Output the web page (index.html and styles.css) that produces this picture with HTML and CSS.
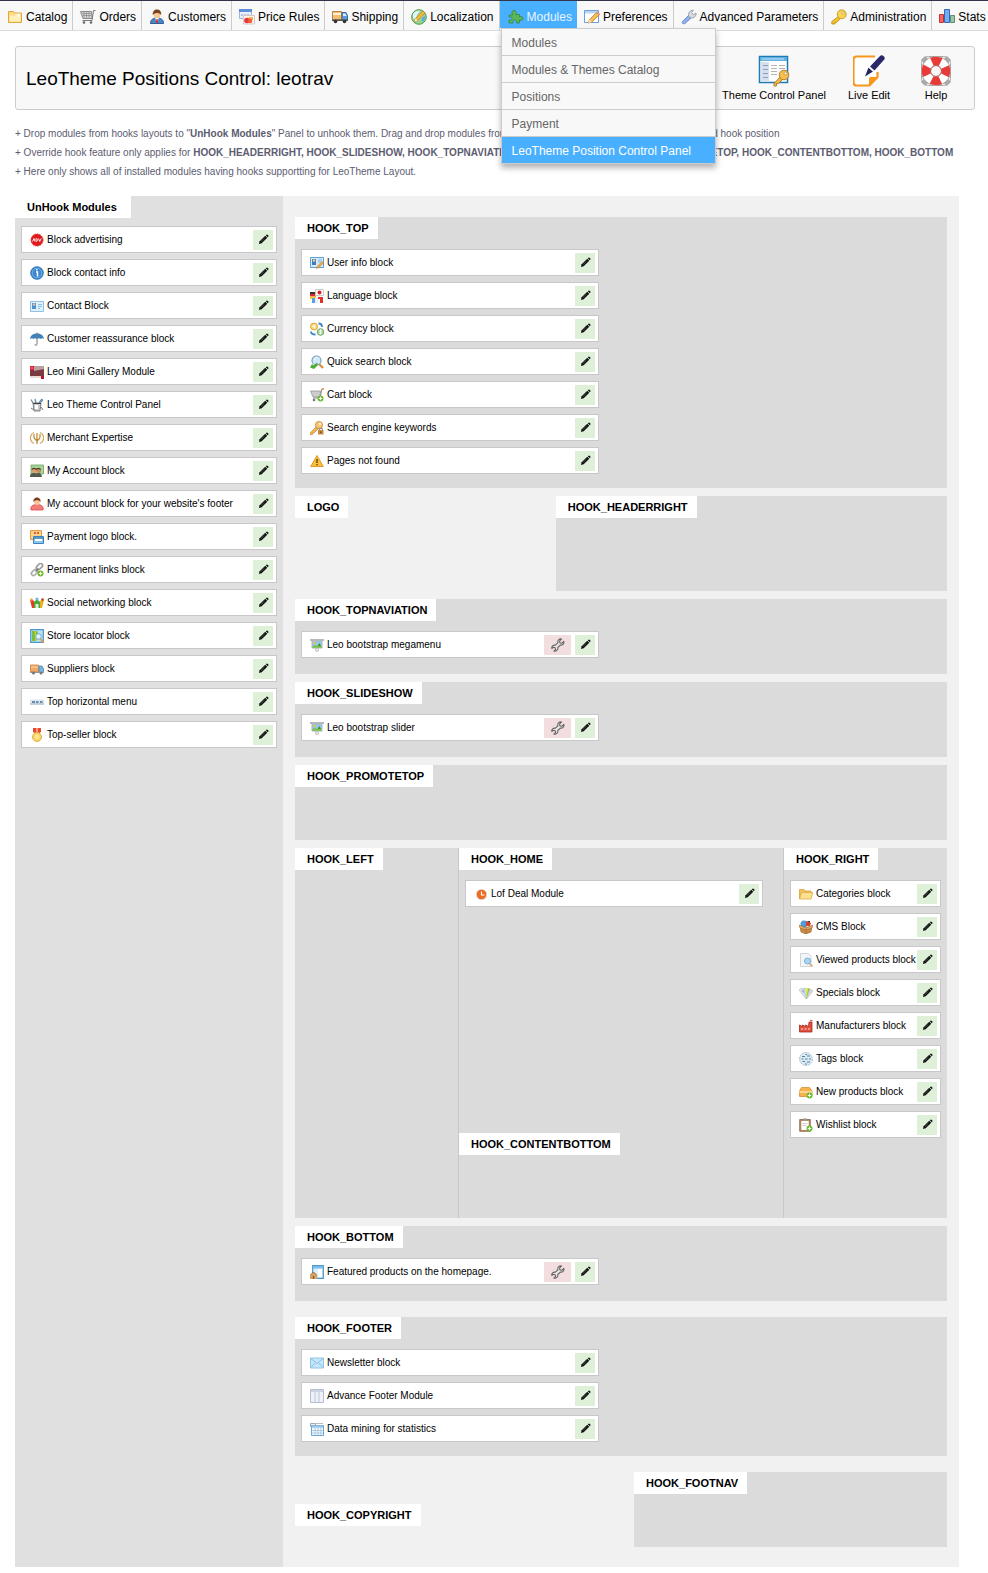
FILE: index.html
```html
<!DOCTYPE html>
<html lang="en">
<head>
<meta charset="utf-8">
<meta name="viewport" content="width=device-width, initial-scale=1">
<title>LeoTheme Positions Control</title>
<link rel="stylesheet" href="styles.css">
</head>
<body>
<svg class="sprite" aria-hidden="true">
  <symbol id="pencil" viewBox="0 0 12 12"><path d="M1 11l.8-3L7.9 2l2.200 2.200L4 10.200z" fill="#111"/><path d="M8.500 1.400l.7-.7a.8.8 0 0 1 1.100 0l1 1a.8.8 0 0 1 0 1.100l-.7.7z" fill="#111"/><path d="M3.200 8.400l4-4" stroke="#777" stroke-width=".6"/></symbol>
  <symbol id="wrench" viewBox="0 0 14 14"><path d="M12.800 3.300l-2.100 2-1.800-.4-.4-1.800 2-2C8.500.4 6.300 2.200 6.800 4.800L4.400 7.200C2.200 6.800.5 8.400.8 10.500l1.700-1.300 1.700.5.4 1.600-1.700 1.800c2.300.5 4.300-1.200 3.900-3.600l2.500-2.400c2.500.4 4.100-1.800 3.500-3.800z" fill="#ece6e6" stroke="#666" stroke-width="1.100" stroke-linejoin="round"/></symbol>
  <symbol id="screen" viewBox="0 0 14 14"><path d="M2 3h10v7H2z" fill="#8cc8f0" stroke="#aeb6bc"/><path d="M0 1h14v2H0z" fill="#b5b9bd"/><path d="M2.500 8l2-1 2 1 2.500-2 2.500 2v1.700h-9z" fill="#7cc144"/><circle cx="4.500" cy="5" r="1.200" fill="#ffc02e"/><path d="M8 8l1.300-3L11 8z" fill="#3f8b2b"/><circle cx="7" cy="12" r="1.600" fill="#e8eaec" stroke="#aaa" stroke-width=".6"/></symbol>
</svg>

<nav class="topbar" aria-label="Main">
  <ul class="menu">
    <li><a href="#"><svg viewBox="0 0 16 16"><path d="M1.500 13.500v-11h5l1 1.500h7v9.500z" fill="#ffd982" stroke="#e0a741"/><path d="M2.500 6.500h11v6h-11z" fill="#ffefb9"/><path d="M7 5l6-.5v4z" fill="#fff7dc"/></svg>Catalog</a></li>
    <li><a href="#"><svg viewBox="0 0 16 16"><path d="M.5 2.500h11l.5 7H3z" fill="#d8d8d8" stroke="#8a8a8a"/><path d="M2 4.500h9.500M2.500 6.500h9M4 3v6M6.500 3v6M9 3v6" stroke="#888" stroke-width=".7"/><path d="M15.500 1.500h-2L12 11.500H2.500" fill="none" stroke="#777"/><circle cx="4" cy="13.500" r="1.300" fill="#666"/><circle cx="11" cy="13.500" r="1.300" fill="#666"/></svg>Orders</a></li>
    <li><a href="#"><svg viewBox="0 0 16 16"><path d="M1.500 14.500c0-4 2.500-5.500 6.500-5.500s6.500 1.500 6.500 5.500z" fill="#4d86c4" stroke="#2f5f99"/><path d="M6 9l2 4 2-4z" fill="#fff"/><path d="M7.500 10h1l.5 3-1 1.500L7 13z" fill="#d22"/><circle cx="8" cy="5.500" r="3.500" fill="#f8c795"/><path d="M3.800 6C3.300 2.500 5.500.5 8 .5s4.700 2 4.200 5.500C11 5 10.500 3.800 8 4 5.500 3.800 5 5 3.800 6z" fill="#7a4420"/></svg>Customers</a></li>
    <li><a href="#"><svg viewBox="0 0 16 16"><path d="M.5.5h12v9H.5z" fill="#e8effb" stroke="#9db6e0"/><path d="M0 0h13v3H0z" fill="#5b8fdc"/><path d="M2 6h8" stroke="#7b95c9" stroke-dasharray="2 1"/><path d="M4.500 6.500h11v8.500h-11z" fill="#fff3ef" stroke="#d6c6c6"/><path d="M10 8h4v3h-4z" fill="#f3b44b"/><circle cx="8" cy="11.500" r="2.800" fill="#e83535"/><circle cx="11" cy="12" r="2.300" fill="#f25f39"/></svg>Price Rules</a></li>
    <li><a href="#"><svg viewBox="0 0 16 16"><path d="M.5 2.500h9v8h-9z" fill="#f5bc74" stroke="#b8824a"/><path d="M1 4h8v2H1z" fill="#fff0d8"/><path d="M10 3.500h4l1.500 3v4.500H10z" fill="#5f98d6" stroke="#376ba6"/><path d="M11 4.500h2.500l1 2.500H11z" fill="#d8ecff"/><path d="M0 10.500h16v1.500H0z" fill="#555"/><circle cx="3.500" cy="12.500" r="1.800" fill="#333"/><circle cx="12.500" cy="12.500" r="1.800" fill="#333"/></svg>Shipping</a></li>
    <li><a href="#"><svg viewBox="0 0 16 16"><circle cx="8" cy="8" r="7.300" fill="#9ad08f" stroke="#4a9d49"/><path d="M2 5c2-3 5-3.500 7-3L6 6 5 9 2 10z" fill="#dff4ff"/><path d="M11 9l3-2c.5 3-1 5-3 6z" fill="#57a9e2"/><path d="M3.500 12.500l1-3 7.500-7.500 2 2-7.500 7.500z" fill="#f6b53c" stroke="#c07c1f" stroke-width=".6"/><path d="M3.500 12.500l1-3 2 2z" fill="#fff2d3"/></svg>Localization</a></li>
    <li class="open"><a href="#" aria-expanded="true"><svg viewBox="0 0 16 16"><path d="M1 6h3.500C3 3 4.500 1.500 6 1.500S9 3 8 5.500h3.500V8c2-1 3.500 0 3.500 1.500s-1.500 2.200-3.500 1.500v3H8.500c.8-2-.3-3-1.700-3s-2.600 1-1.800 3H1v-3c2 .5 3-.3 3-1.500S3 7.500 1 8z" fill="#5bb65a" stroke="#37883b" stroke-width=".8"/></svg>Modules</a>
      <ul class="submenu">
        <li><a href="#">Modules</a></li>
        <li><a href="#">Modules &amp; Themes Catalog</a></li>
        <li><a href="#">Positions</a></li>
        <li><a href="#">Payment</a></li>
        <li class="current"><a href="#" aria-current="page">LeoTheme Position Control Panel</a></li>
      </ul>
    </li>
    <li><a href="#"><svg viewBox="0 0 16 16"><path d="M.5 1.500h14v12H.5z" fill="#fff" stroke="#6c9fd8"/><path d="M1 2h13v2.500H1z" fill="#b9d8f6"/><path d="M4 14l1.500-3.500L13 3l2.500 2.500L8 13z" fill="#f7bd50" stroke="#b7772a" stroke-width=".7"/><path d="M12 4l1.500-1.500 2.300 2.300L14.500 6z" fill="#e98d77"/><path d="M4 14l1.500-3.500L8 13z" fill="#f9e4bd"/></svg>Preferences</a></li>
    <li><a href="#"><svg viewBox="0 0 16 16"><path d="M1.500 12.500l6-6 2.500 2.500-6 5.500c-2 1-3.500-.5-2.500-2z" fill="#8fb1ee" stroke="#587dc6" stroke-width=".8"/><path d="M7.500 7C7 3.500 9.500.8 12.500 1.300L10.500 3.500l2 2.200L15 4c.5 3-2 5.500-5.500 5z" fill="#d7dbe0" stroke="#8b9097" stroke-width=".8"/></svg>Advanced Parameters</a></li>
    <li><a href="#"><svg viewBox="0 0 16 16"><path d="M8 7l2 2-4.500 4.500H4V15H.8v-2.500z" fill="#f4c131" stroke="#b98918" stroke-width=".8"/><circle cx="10.700" cy="5.300" r="4.500" fill="#f9d453" stroke="#bf8f1c" stroke-width=".8"/><circle cx="12" cy="4" r="1.300" fill="#fff" stroke="#b98918" stroke-width=".6"/></svg>Administration</a></li>
    <li><a href="#"><svg viewBox="0 0 16 16"><path d="M.5 5.500h4v8h-4z" fill="#f16666" stroke="#c43232"/><path d="M5.500.5h5v13h-5z" fill="#74aef0" stroke="#3267b8"/><path d="M11.500 6.500h4v7h-4z" fill="#9bc7a8" stroke="#5d8d75"/></svg>Stats</a></li>
  </ul>
</nav>

<header class="page-head">
  <h1>LeoTheme Positions Control: leotrav</h1>
  <div class="tools">
    <a href="#"><svg viewBox="0 0 32 32"><path d="M1.500 1.500h28v26h-28z" fill="#fff" stroke="#1d7ab5" stroke-width="1.500"/><path d="M2 2h27v4H2z" fill="#62afe2"/><path d="M4 4h22" stroke="#bfe2f8"/><path d="M3 7h8v20H3z" fill="#d4e0ee"/><path d="M5 10.500h5M5 14.500h5M5 18.500h5M5 22.500h5" stroke="#8aa0bd"/><path d="M13 10.500h6M21 10.500h6M13 13.500h6M21 13.500h6M13 16.500h6M13 19.500h6" stroke="#b3b3b3"/><path d="M23 21l2.500 2.500-5 5h-2V31h-2.500v-2.500z" fill="#f3b53f" stroke="#a4701d" stroke-width=".8"/><circle cx="26" cy="20" r="4.800" fill="#f7bd4e" stroke="#a4701d" stroke-width=".8"/><circle cx="27.500" cy="18.500" r="1.400" fill="#fff" stroke="#a4701d" stroke-width=".6"/></svg>Theme Control Panel</a>
    <a href="#"><svg viewBox="0 0 32 32"><path d="M22 1.500H3.500a3 3 0 0 0-3 3v23a3 3 0 0 0 3 3h13l8-8.500v-5" fill="#fff" stroke="#f8961e" stroke-width="2.200"/><path d="M16 31v-7a2 2 0 0 1 2-2h7z" fill="#f8961e"/><path d="M15.500 12.500l4.500 4-8 5z" fill="#25235f"/><path d="M17 11.500L27 1c2-2 6 1 4.300 3.600L21.500 15.500z" fill="#2a2869"/><path d="M15.500 12l4.500 4.500" stroke="#fff" stroke-width=".7"/></svg>Live Edit</a>
    <a href="#"><svg viewBox="0 0 32 32"><path d="M3 3l26 26M29 3L3 29" stroke="#aaa" stroke-width="6"/><rect x="1.500" y="1.500" width="29" height="29" rx="7" fill="none" stroke="#a9a9a9"/><circle cx="16" cy="16" r="10" fill="none" stroke="#9c9c9c" stroke-width="10"/><circle cx="16" cy="16" r="10" fill="none" stroke="#fff" stroke-width="8.500"/><circle cx="16" cy="16" r="10" fill="none" stroke="#e83a36" stroke-width="8.500" stroke-dasharray="9 6.708" stroke-dashoffset="4.500"/><circle cx="16" cy="16" r="5.400" fill="#f8f8f8" stroke="#a33" stroke-width=".8"/></svg>Help</a>
  </div>
</header>

<div class="notes">
  <p>+ Drop modules from hooks layouts to "<b>UnHook Modules</b>" Panel to unhook them. Drag and drop modules from unhook panel or from other hooks, to expected hook position</p>
  <p>+ Override hook feature only applies for <b>HOOK_HEADERRIGHT, HOOK_SLIDESHOW, HOOK_TOPNAVIATION, HOOK_CONTENTTOP, HOOK_PROMOTETOP, HOOK_CONTENTBOTTOM, HOOK_BOTTOM</b></p>
  <p>+ Here only shows all of installed modules having hooks supportting for LeoTheme Layout.</p>
</div>

<main class="board">
  <section class="unhooked">
    <h2 class="tab">UnHook Modules</h2>
    <ul class="modules">
      <li><svg viewBox="0 0 14 14"><circle cx="7" cy="7" r="6" fill="#e01b1b" stroke="#e01b1b" stroke-dasharray="1.500 1"/><path d="M2.500 8.500L4 5.500l1 3M6 5.500v3c2 0 2-3 0-3M8.500 5.500l1.200 3 1.500-3" stroke="#fff" fill="none" stroke-width=".9"/></svg><span>Block advertising</span><button class="edit" aria-label="Edit Block advertising"><svg><use href="#pencil"/></svg></button></li>
      <li><svg viewBox="0 0 14 14"><circle cx="7" cy="7" r="6.300" fill="#3b86d0" stroke="#2263a8" stroke-width=".8"/><circle cx="7" cy="7" r="4.800" fill="none" stroke="#9ccdf5" stroke-width=".6"/><path d="M6 6h1.500v4.500M6.200 3.800h1.300" stroke="#fff" stroke-width="1.500" fill="none"/></svg><span>Block contact info</span><button class="edit" aria-label="Edit Block contact info"><svg><use href="#pencil"/></svg></button></li>
      <li><svg viewBox="0 0 14 14"><path d="M.5 2.500h13v10H.5z" fill="#dff1fc" stroke="#8fc1e3"/><path d="M2 4h4v6H2z" fill="#4c92cc"/><circle cx="4" cy="5.500" r="1.200" fill="#f5c493"/><path d="M8 5.500h4M8 7.500h4M8 9.500h2" stroke="#8fbfe0"/></svg><span>Contact Block</span><button class="edit" aria-label="Edit Contact Block"><svg><use href="#pencil"/></svg></button></li>
      <li><svg viewBox="0 0 14 14"><path d="M0 7c.5-4 3.500-5.500 7-5.500S13.500 3 14 7c-1.500-1-2.500-1-3.500 0-1-1-2.500-1-3.500 0-1-1-2.500-1-3.500 0C2.500 6 1.500 6 0 7z" fill="#3c83bf"/><path d="M7 .5v11.800c0 1.500-2 1.500-2 0" fill="none" stroke="#777"/></svg><span>Customer reassurance block</span><button class="edit" aria-label="Edit Customer reassurance block"><svg><use href="#pencil"/></svg></button></li>
      <li><svg viewBox="0 0 14 14"><path d="M0 1h14v11H0z" fill="#7a3a40"/><path d="M0 1h4v4H0z" fill="#e0223a"/><path d="M1.500 2.500h1v1h-1z" fill="#fff"/><path d="M4 1h10v3L4 6z" fill="#b9a3a0"/><path d="M0 11h14v2H0z" fill="#e9d9d9"/><path d="M11 11h3v3h-3z" fill="#b3162a"/></svg><span>Leo Mini Gallery Module</span><button class="edit" aria-label="Edit Leo Mini Gallery Module"><svg><use href="#pencil"/></svg></button></li>
      <li><svg viewBox="0 0 14 14"><path d="M3 5L1 1.500M6 5L5 1M9 5l3-4" stroke="#6b8aa5" stroke-width="1.300"/><path d="M12 1l1.500 1L10 6z" fill="#4d90cc"/><path d="M3 5h8l-1 8H4z" fill="#c8ccd0" stroke="#666" stroke-width=".8"/><path d="M5 7h3v4H5z" fill="#fff"/><path d="M3 5.500h8" stroke="#444"/><path d="M1 10l3 2M11 9l2 3" stroke="#777"/></svg><span>Leo Theme Control Panel</span><button class="edit" aria-label="Edit Leo Theme Control Panel"><svg><use href="#pencil"/></svg></button></li>
      <li><svg viewBox="0 0 14 14"><path d="M4 1.500a6 6 0 0 0 0 11M10 1.500a6 6 0 0 1 0 11" fill="none" stroke="#d2a657" stroke-width="1.300"/><path d="M4 3v3c0 3 3 2 3 5M10 3v3c0 3-3 2-3 5M7 2v11" fill="none" stroke="#b98730" stroke-width="1.200"/></svg><span>Merchant Expertise</span><button class="edit" aria-label="Edit Merchant Expertise"><svg><use href="#pencil"/></svg></button></li>
      <li><svg viewBox="0 0 14 14"><path d="M1 1h12.500v9H1z" fill="#a5d49b" stroke="#6ba566" stroke-width=".8"/><path d="M0 13c0-3 1-4 3.500-4S7 10 8 9s4 1 4 4z" fill="#555a50"/><circle cx="4" cy="6.500" r="2.500" fill="#d9a273"/><circle cx="8.500" cy="6.500" r="2.500" fill="#c98c5c"/><path d="M1.500 6c0-3 5-3 5 0L4 5zM6 6c0-3 5-3 5 0L8.500 5z" fill="#5a3a22"/></svg><span>My Account block</span><button class="edit" aria-label="Edit My Account block"><svg><use href="#pencil"/></svg></button></li>
      <li><svg viewBox="0 0 14 14"><path d="M1 13c-1-4 2-5.500 6-5.500s7 1.500 6 5.500z" fill="#f17c78" stroke="#d24d4a" stroke-width=".8"/><circle cx="7" cy="5" r="3" fill="#f9c79a"/><path d="M3.500 5C3 2 5 .5 7 .5S11 2 10.500 5C9.500 3.500 8 3.300 7 3.300S4.500 3.500 3.500 5z" fill="#7c3d22"/></svg><span>My account block for your website's footer</span><button class="edit" aria-label="Edit My account block for your website's footer"><svg><use href="#pencil"/></svg></button></li>
      <li><svg viewBox="0 0 14 14"><path d="M.5.500h11v9H.5z" fill="#fbd18a" stroke="#df9a45"/><path d="M4 2h2v2H4zM7 2h2v2H7z" fill="#e65c36"/><path d="M3.500 6.500h10v7h-10z" fill="#8ac4f0" stroke="#3c82bf"/><path d="M5 9h7v2H5z" fill="#fff"/><path d="M4 8h9" stroke="#2a68a2"/></svg><span>Payment logo block.</span><button class="edit" aria-label="Edit Payment logo block."><svg><use href="#pencil"/></svg></button></li>
      <li><svg viewBox="0 0 14 14"><rect x="6" y="1.500" width="7" height="4" rx="2" transform="rotate(-45 9.500 3.500)" fill="none" stroke="#999" stroke-width="1.600"/><rect x="1" y="7.500" width="7" height="4" rx="2" transform="rotate(-45 4.500 9.500)" fill="none" stroke="#aaa" stroke-width="1.600"/><path d="M5.500 8.500l3-3" stroke="#777" stroke-width="1.500"/><circle cx="10.500" cy="10.500" r="3" fill="#6cbd2d"/><path d="M8.800 10.500h3.400M10.500 8.800v3.400" stroke="#fff"/></svg><span>Permanent links block</span><button class="edit" aria-label="Edit Permanent links block"><svg><use href="#pencil"/></svg></button></li>
      <li><svg viewBox="0 0 14 14"><path d="M0 4h3l2 3-1 5H2z" fill="#e43c25"/><path d="M14 4h-3L9 7l1 5h2z" fill="#e9b11c"/><path d="M4 6l3-3 3 3v6H4z" fill="#4aa83a"/><path d="M5.500 8h3v4h-3z" fill="#dff0d8"/><circle cx="1.500" cy="3.500" r="1.300" fill="#f2a93b"/><circle cx="7" cy="3" r="1.500" fill="#67b7e8"/><circle cx="12.500" cy="3.500" r="1.300" fill="#b04127"/></svg><span>Social networking block</span><button class="edit" aria-label="Edit Social networking block"><svg><use href="#pencil"/></svg></button></li>
      <li><svg viewBox="0 0 14 14"><path d="M.7.700h12.600v12.600H.7z" fill="#b9e0f5" stroke="#4a95c9" stroke-width="1.200"/><path d="M2 2h5l2 4-3 6H2z" fill="#79c13c"/><path d="M5 2l1 10" stroke="#f4d03c"/><circle cx="8.500" cy="7.500" r="2.800" fill="#dff3ff" stroke="#79a8c8"/><path d="M10.500 10l3 3.500" stroke="#e8973a" stroke-width="1.600"/></svg><span>Store locator block</span><button class="edit" aria-label="Edit Store locator block"><svg><use href="#pencil"/></svg></button></li>
      <li><svg viewBox="0 0 14 14"><path d="M.5 3h8v7h-8z" fill="#f0a965" stroke="#c47e3d" stroke-width=".8"/><path d="M1 5h7" stroke="#ffd9a8"/><path d="M9 4h3l1.600 3v3.500H9z" fill="#79b4df" stroke="#5385ad" stroke-width=".8"/><path d="M0 10h14v1H0z" fill="#999"/><circle cx="3.500" cy="11" r="1.500" fill="#777"/><circle cx="11" cy="11" r="1.500" fill="#777"/></svg><span>Suppliers block</span><button class="edit" aria-label="Edit Suppliers block"><svg><use href="#pencil"/></svg></button></li>
      <li><svg viewBox="0 0 14 14"><path d="M0 4.500h14v5H0z" fill="#dde7ef"/><path d="M0 9h14" stroke="#9cb0bf"/><path d="M2 7h3M6 7h2.500M10 7h2.500" stroke="#426f96" stroke-width="1.400"/></svg><span>Top horizontal menu</span><button class="edit" aria-label="Edit Top horizontal menu"><svg><use href="#pencil"/></svg></button></li>
      <li><svg viewBox="0 0 14 14"><path d="M3 0h8v4L7 6.500 3 4z" fill="#e8492e"/><path d="M6 0h2v5H6z" fill="#f8a07a"/><circle cx="7" cy="9" r="4.500" fill="#fbd264" stroke="#e9a93a" stroke-width=".9"/><circle cx="7" cy="9" r="2.400" fill="#fde79a"/></svg><span>Top-seller block</span><button class="edit" aria-label="Edit Top-seller block"><svg><use href="#pencil"/></svg></button></li>
    </ul>
  </section>

  <div class="hooks">
    <section class="hook">
      <h2 class="tab">HOOK_TOP</h2>
      <ul class="modules">
        <li><svg viewBox="0 0 14 14"><path d="M.5 1.500h13v10H.5z" fill="#d7ecfa" stroke="#5fa0d2"/><path d="M2 3h4v6H2z" fill="#3d7fb8"/><circle cx="4" cy="4.500" r="1.300" fill="#f5c493"/><path d="M8 4h4M8 6h3" stroke="#7fb1d8"/><path d="M6.500 12.500l1-2.500 4.500-4.500 1.500 1.500L9 11.500z" fill="#f2a94e" stroke="#b8742b" stroke-width=".5"/></svg><span>User info block</span><button class="edit" aria-label="Edit User info block"><svg><use href="#pencil"/></svg></button></li>
        <li><svg viewBox="0 0 14 14"><path d="M0 3h6v2.500H0z" fill="#333"/><path d="M0 5h6v2.500H0z" fill="#dd2b2b"/><path d="M0 7.500h6V10H0z" fill="#f6c62e"/><path d="M5.500.500h8v6h-8z" fill="#fff" stroke="#ccc"/><circle cx="9.500" cy="3.500" r="2" fill="#e02020"/><path d="M2 9h3v5H2z" fill="#5b9fe0"/><path d="M5 9h3v5H5z" fill="#eee"/><path d="M8 8h5v6h-3v-4H8z" fill="#e13327"/></svg><span>Language block</span><button class="edit" aria-label="Edit Language block"><svg><use href="#pencil"/></svg></button></li>
        <li><svg viewBox="0 0 14 14"><circle cx="4" cy="4.500" r="3.500" fill="#f9d77d" stroke="#e2a63a"/><path d="M5.500 3C3 2.500 3 6.500 5.500 6M2.500 4.500H5" fill="none" stroke="#fff"/><circle cx="10.500" cy="10" r="3.300" fill="#a9d3a2" stroke="#6fa968"/><path d="M12 8.500c-3-1-3 1-1.500 1.500s1.500 2-1.500 1.300M10.500 7.500v5" fill="none" stroke="#fff" stroke-width=".8"/><path d="M8.500 1.500c2.500 0 3.500 1 3.500 3.500M1 9.500c0 2.500 1.500 3 4.500 3" fill="none" stroke="#3d86c8" stroke-width="1.800"/></svg><span>Currency block</span><button class="edit" aria-label="Edit Currency block"><svg><use href="#pencil"/></svg></button></li>
        <li><svg viewBox="0 0 14 14"><path d="M9 9l4 4" stroke="#dc8a34" stroke-width="2.200"/><circle cx="6.500" cy="5.500" r="4.500" fill="#cfe8fa" stroke="#7c9fbd" stroke-width="1.200"/><path d="M4 5c0-2 2-3 4-2" fill="none" stroke="#fff"/><path d="M0 12.500l2-3.500 1.500 1.500L7 7.500l1 2.500-4 4z" fill="#4cac34"/></svg><span>Quick search block</span><button class="edit" aria-label="Edit Quick search block"><svg><use href="#pencil"/></svg></button></li>
        <li><svg viewBox="0 0 14 14"><path d="M.5 3h10l-.5 6H3z" fill="#ccc" stroke="#999" stroke-width=".8"/><path d="M13.500 1h-1.700L10 10H3" fill="none" stroke="#888"/><path d="M12 1h2" stroke="#ef9537" stroke-width="1.500"/><circle cx="4" cy="12" r="1.300" fill="#777"/><circle cx="10.500" cy="10.500" r="3" fill="#6cbd2d"/><path d="M8.800 10.500h3.400M10.500 8.800v3.400" stroke="#fff"/></svg><span>Cart block</span><button class="edit" aria-label="Edit Cart block"><svg><use href="#pencil"/></svg></button></li>
        <li><svg viewBox="0 0 14 14"><path d="M7 5l2 2-5 5H2.500v1.500H0V12z" fill="#f1b453" stroke="#bd8230" stroke-width=".6"/><circle cx="9" cy="4" r="3.600" fill="#f7c56e" stroke="#bd8230" stroke-width=".7"/><circle cx="10" cy="3" r="1" fill="#fff"/><path d="M8 9h5.500v4.500H8z" fill="#c9883b"/><path d="M9.300 9V7.500h3V9" fill="none" stroke="#888"/><path d="M10.300 10.500h1V12h-1z" fill="#333"/></svg><span>Search engine keywords</span><button class="edit" aria-label="Edit Search engine keywords"><svg><use href="#pencil"/></svg></button></li>
        <li><svg viewBox="0 0 14 14"><path d="M7 1.500l6.300 11H.7z" fill="#fcbf3a" stroke="#e3962a" stroke-linejoin="round"/><path d="M7 5v4M7 10v1.300" stroke="#5a4020" stroke-width="1.400"/></svg><span>Pages not found</span><button class="edit" aria-label="Edit Pages not found"><svg><use href="#pencil"/></svg></button></li>
      </ul>
    </section>

    <div class="row row-header">
      <section class="hook clear"><h2 class="tab">LOGO</h2></section>
      <section class="hook"><h2 class="tab">HOOK_HEADERRIGHT</h2></section>
    </div>

    <section class="hook">
      <h2 class="tab">HOOK_TOPNAVIATION</h2>
      <ul class="modules">
        <li><svg><use href="#screen"/></svg><span>Leo bootstrap megamenu</span><button class="override" aria-label="Override Leo bootstrap megamenu"><svg><use href="#wrench"/></svg></button><button class="edit" aria-label="Edit Leo bootstrap megamenu"><svg><use href="#pencil"/></svg></button></li>
      </ul>
    </section>

    <section class="hook">
      <h2 class="tab">HOOK_SLIDESHOW</h2>
      <ul class="modules">
        <li><svg><use href="#screen"/></svg><span>Leo bootstrap slider</span><button class="override" aria-label="Override Leo bootstrap slider"><svg><use href="#wrench"/></svg></button><button class="edit" aria-label="Edit Leo bootstrap slider"><svg><use href="#pencil"/></svg></button></li>
      </ul>
    </section>

    <section class="hook"><h2 class="tab">HOOK_PROMOTETOP</h2></section>

    <div class="row row-content">
      <section class="hook"><h2 class="tab">HOOK_LEFT</h2></section>
      <div class="center">
        <section class="hook home">
          <h2 class="tab">HOOK_HOME</h2>
          <ul class="modules">
            <li><svg viewBox="0 0 14 14"><circle cx="7.500" cy="7.500" r="5.600" fill="#ddd"/><circle cx="7.500" cy="7.500" r="4.800" fill="#ee6c22"/><path d="M7.500 4.500v3.500h3" fill="none" stroke="#fff" stroke-width="1.100"/></svg><span>Lof Deal Module</span><button class="edit" aria-label="Edit Lof Deal Module"><svg><use href="#pencil"/></svg></button></li>
          </ul>
        </section>
        <section class="hook"><h2 class="tab">HOOK_CONTENTBOTTOM</h2></section>
      </div>
      <section class="hook">
        <h2 class="tab">HOOK_RIGHT</h2>
        <ul class="modules">
          <li><svg viewBox="0 0 14 14"><path d="M.5 12V2.500h4.500l1 1.500h6v2" fill="#f4c35a" stroke="#d9a23b" stroke-width=".8"/><path d="M.5 12l2-6.500h11.300l-1.800 6.500z" fill="#fde08e" stroke="#dfaa48" stroke-width=".8"/></svg><span>Categories block</span><button class="edit" aria-label="Edit Categories block"><svg><use href="#pencil"/></svg></button></li>
          <li><svg viewBox="0 0 14 14"><circle cx="5" cy="4" r="3.500" fill="#4f9bd8"/><path d="M7 1l5 2-1 3H7z" fill="#d8402c"/><path d="M8 1h3v2z" fill="#333"/><path d="M1 6l6 2 6-2-1 6-5 2-5-2z" fill="#c98a42" stroke="#94602a" stroke-width=".6"/><path d="M7 8v6M0 5l7 3 7-3-1 3-6 2-6-2z" fill="#e2ad68" stroke="#94602a" stroke-width=".5"/></svg><span>CMS Block</span><button class="edit" aria-label="Edit CMS Block"><svg><use href="#pencil"/></svg></button></li>
          <li><svg viewBox="0 0 14 14"><path d="M1.500.500h8l2.500 3v10H1.500z" fill="#f4f5f7" stroke="#d0d3d8"/><path d="M10.500 10.500l3 3" stroke="#d9a36a" stroke-width="1.500"/><circle cx="8.500" cy="8" r="3" fill="#a8d6f5" stroke="#82acd0"/></svg><span>Viewed products block</span><button class="edit" aria-label="Edit Viewed products block"><svg><use href="#pencil"/></svg></button></li>
          <li><svg viewBox="0 0 14 14"><path d="M0 4l3-2 5 10-1 1z" fill="#dfe3e6" stroke="#aaa" stroke-width=".5"/><path d="M3 3l3-1.500 1.500 11z" fill="#9fd8ef"/><path d="M6 2h3l-1.500 11z" fill="#f2e14c"/><path d="M9 2l2.500 1L7 13z" fill="#8cca6b"/><path d="M11 3l3 2-6.500 8z" fill="#ddd" stroke="#aaa" stroke-width=".5"/><path d="M3 5l2 1" stroke="#d678b5"/></svg><span>Specials block</span><button class="edit" aria-label="Edit Specials block"><svg><use href="#pencil"/></svg></button></li>
          <li><svg viewBox="0 0 14 14"><path d="M.5 13V6l3 1.500V6l3 1.500V6l3 1.500L10 3h3v10z" fill="#e0503f" stroke="#a9291d" stroke-width=".8"/><path d="M2 10h2M5.500 10h2M9 10h2" stroke="#ffd9d0" stroke-width="1.200"/><path d="M11 1.500h2.500" stroke="#c66" stroke-width="1.200"/></svg><span>Manufacturers block</span><button class="edit" aria-label="Edit Manufacturers block"><svg><use href="#pencil"/></svg></button></li>
          <li><svg viewBox="0 0 14 14"><circle cx="7" cy="7" r="6.400" fill="#dcecf5" stroke="#a5bfcf" stroke-dasharray="2 .8"/><path d="M3 4.500h3M8 4h3M2.500 7h2M6 7h2.500M10 7h2M3.500 9.500H6M8 10h3M6 12h2M6.500 2.500H8" stroke="#57809d" stroke-width="1.100"/></svg><span>Tags block</span><button class="edit" aria-label="Edit Tags block"><svg><use href="#pencil"/></svg></button></li>
          <li><svg viewBox="0 0 14 14"><path d="M2.500 2.500h8L13 6v5.500H.5V6z" fill="#f6b34d" stroke="#d98f2c" stroke-width=".8"/><path d="M.5 6H13v2H.5z" fill="#fcd691"/><circle cx="10.500" cy="10.500" r="3" fill="#6cbd2d"/><path d="M8.800 10.500h3.400M10.500 8.800v3.400" stroke="#fff"/></svg><span>New products block</span><button class="edit" aria-label="Edit New products block"><svg><use href="#pencil"/></svg></button></li>
          <li><svg viewBox="0 0 14 14"><path d="M.7 1.500h10.600v11.800H.7z" fill="#b98a60" stroke="#8b623f" stroke-width=".8"/><path d="M2.300 3h7.400v9H2.300z" fill="#fff"/><path d="M4 .5h4v2.300H4z" fill="#999"/><path d="M3.500 5.500h5M3.500 7.500h4" stroke="#ccc"/><circle cx="10.500" cy="10.500" r="3" fill="#6cbd2d"/><path d="M8.800 10.500h3.400M10.500 8.800v3.400" stroke="#fff"/></svg><span>Wishlist block</span><button class="edit" aria-label="Edit Wishlist block"><svg><use href="#pencil"/></svg></button></li>
        </ul>
      </section>
    </div>

    <section class="hook spaced">
      <h2 class="tab">HOOK_BOTTOM</h2>
      <ul class="modules">
        <li><svg viewBox="0 0 14 14"><path d="M2.700.700h10.600v12.600H2.700z" fill="#d9effc" stroke="#4a95c9" stroke-width="1.200"/><path d="M3 1h10v2.500H3z" fill="#7abdec"/><path d="M8 4h4v8H8z" fill="#fff"/><path d="M0 10.500L3.500 7 7 10.500V14H0z" fill="#d8a264"/><path d="M0 10.500L3.500 7 7 10.500" fill="none" stroke="#9b6b34"/><path d="M2.800 11h1.500v3H2.800z" fill="#8d6030"/></svg><span>Featured products on the homepage.</span><button class="override" aria-label="Override Featured products on the homepage."><svg><use href="#wrench"/></svg></button><button class="edit" aria-label="Edit Featured products on the homepage."><svg><use href="#pencil"/></svg></button></li>
      </ul>
    </section>

    <section class="hook spaced">
      <h2 class="tab">HOOK_FOOTER</h2>
      <ul class="modules">
        <li><svg viewBox="0 0 14 14"><path d="M.5 2h13v10H.5z" fill="#c3e6fa" stroke="#93c5e4"/><path d="M1 2.500l6 5 6-5M1 11.500l4.500-5M13 11.500l-4.500-5" fill="none" stroke="#7db8de" stroke-width=".8"/></svg><span>Newsletter block</span><button class="edit" aria-label="Edit Newsletter block"><svg><use href="#pencil"/></svg></button></li>
        <li><svg viewBox="0 0 14 14"><path d="M.5.500h13v13H.5z" fill="#eef1f7" stroke="#b5bfd0"/><path d="M1 1h12v2H1z" fill="#cbd4e3"/><path d="M5 3v10M9 3v10" stroke="#bcc6d8"/></svg><span>Advance Footer Module</span><button class="edit" aria-label="Edit Advance Footer Module"><svg><use href="#pencil"/></svg></button></li>
        <li><svg viewBox="0 0 14 14"><path d="M.5 1.500h5v3h-5z" fill="#e6edf3" stroke="#9ab"/><path d="M1.500 3.500h12v10h-12z" fill="#f2f9ff" stroke="#6fa5cf"/><path d="M2 3.500h11v2.300H2z" fill="#9cc6e6"/><path d="M6 1.500h7" stroke="#bbb"/><path d="M2 8.500h11M2 11h11M5 6v7M8 6v7M10.800 6v7" stroke="#9fc3de" stroke-width=".8"/></svg><span>Data mining for statistics</span><button class="edit" aria-label="Edit Data mining for statistics"><svg><use href="#pencil"/></svg></button></li>
      </ul>
    </section>

    <div class="row row-footer">
      <section class="hook clear copyright"><h2 class="tab">HOOK_COPYRIGHT</h2></section>
      <section class="hook"><h2 class="tab">HOOK_FOOTNAV</h2></section>
    </div>
  </div>
</main>
</body>
</html>
```
FILE: styles.css
```css
* { box-sizing: border-box; }

body {
  margin: 0;
  background: #fff;
  color: #000;
  font-family: "Liberation Sans", Arial, sans-serif;
  font-size: 12px;
  overflow-x: clip;
}

ul { list-style: none; margin: 0; padding: 0; }
h1, h2, p { margin: 0; }
a { color: inherit; text-decoration: none; }
svg { display: block; flex: none; }
.sprite { display: none; }

/* Top menu */
.topbar {
  height: 31px;
  border-top: 1px solid #33344a;
  border-bottom: 1px solid #dcdcdc;
  background: #f8f8f8;
}
.menu { display: flex; height: 100%; }
.menu > li {
  position: relative;
  flex: none;
  border-right: 1px solid #ccc;
}
.menu > li > a {
  display: flex;
  align-items: center;
  gap: 3px;
  height: 29px;
  padding: 2px 5px 0 7px;
  white-space: nowrap;
}
.menu > li > a > svg { width: 16px; height: 16px; }
.menu > .open { border-right: 0; }
.menu > .open > a {
  height: 27px;
  padding: 4px 5px 0 8px;
  background: #49b0ff;
  color: #e8f5ff;
}
.submenu {
  position: absolute;
  top: 27px;
  left: 1px;
  z-index: 2;
  width: 215px;
  border: 1px solid #ccc;
  background: #f8f8f8;
  box-shadow: 0 4px 6px rgba(0, 0, 0, .3);
}
.submenu a {
  display: block;
  padding: 2px 10px 0;
  color: #666;
  line-height: 24px;
}
.submenu li + li { border-top: 1px solid #ccc; }
.submenu .current a { background: #49b0ff; color: #fff; }

/* Page header */
.page-head {
  display: flex;
  align-items: center;
  justify-content: space-between;
  height: 64px;
  margin: 15px 13px 0 15px;
  padding: 1px 14px 0 10px;
  border: 1px solid #ccc;
  border-radius: 3px;
  background: #f8f8f8;
}
.page-head h1 { font-size: 19px; font-weight: 400; }
.tools { display: flex; gap: 19px; font-size: 11px; }
.tools a {
  display: flex;
  flex-direction: column;
  align-items: center;
  gap: 1px;
  min-width: 48px;
  line-height: 14px;
}
.tools svg { width: 32px; height: 32px; }

/* Notes */
.notes {
  padding: 14px 15px 15px;
  color: #5c5c70;
  font-size: 10px;
  line-height: 19px;
  white-space: nowrap;
}

/* Board */
.board {
  display: grid;
  grid-template-columns: 268px minmax(0, 1fr);
  margin: 0 29px 6px 15px;
}
.unhooked { background: #e0e0e0; }
.hooks {
  display: flex;
  flex-direction: column;
  gap: 8px;
  padding: 21px 12px 20px;
  background: #f1f1f1;
}
.hook {
  min-height: 75px;
  padding-bottom: 14px;
  background: #dbdbdb;
}
.hook.clear { background: none; }
.spaced { margin-bottom: 8px; }
.tab {
  width: max-content;
  padding: 0 9px 0 12px;
  background: #fff;
  font-size: 11px;
  line-height: 22px;
}
.unhooked .tab { padding-right: 14px; }

.row { display: grid; }
.row-header { grid-template-columns: 2fr 3fr; min-height: 95px; }
.row-content { grid-template-columns: 1fr 2fr 1fr; min-height: 370px; }
.row-content .hook { min-width: 0; }
.row-footer { grid-template-columns: 52fr 48fr; }
.center {
  display: flex;
  flex-direction: column;
  border: solid #c8c8c8;
  border-width: 0 1px;
}
.center .home { flex: 1; }
.center .hook:last-child { min-height: 85px; }
.copyright { padding-top: 32px; }

/* Module entries */
.modules {
  display: flex;
  flex-direction: column;
  gap: 6px;
  padding: 10px 6px 0;
}
.unhooked .modules { padding: 8px 6px; }
.modules li {
  display: flex;
  align-items: center;
  width: 100%;
  max-width: 298px;
  height: 27px;
  padding: 0 3px 0 8px;
  border: 1px solid #c8c8c8;
  background: #fff;
}
.modules li > svg { width: 14px; height: 14px; }
.modules span {
  flex: 1;
  overflow: hidden;
  padding-left: 3px;
  font-size: 10px;
  line-height: 14px;
  white-space: nowrap;
}
.modules button {
  display: flex;
  align-items: center;
  justify-content: center;
  flex: none;
  height: 20px;
  padding: 0;
  border: 0;
}
.edit { width: 20px; background: #dff0d8; }
.edit svg { width: 11px; height: 11px; }
.override { width: 27px; margin-right: 4px; background: #f2dede; }
.override svg { width: 14px; height: 14px; }
```
